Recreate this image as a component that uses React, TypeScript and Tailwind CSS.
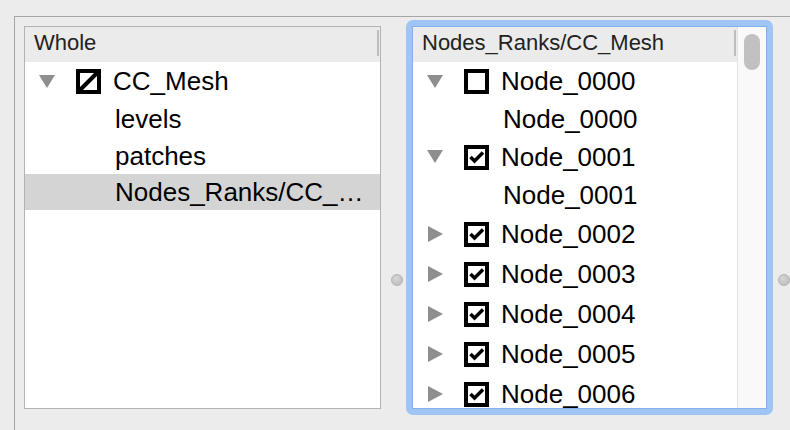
import React from 'react';

const font = "font-['Liberation_Sans',Arial,sans-serif]";

const Triangle = ({ open }: { open: boolean }) => (
  <svg width="16" height="16" viewBox="0 0 16 16" className="shrink-0">
    {open ? (
      <polygon points="0,1 16,1 8,14" fill="#8e8e8e" />
    ) : (
      <polygon points="1,0 16,8 1,16" fill="#8e8e8e" />
    )}
  </svg>
);

const Check = ({ state }: { state: 'on' | 'off' | 'partial' }) => (
  <svg width="25" height="25" viewBox="0 0 25 25" className="ml-[21px] shrink-0">
    <rect x="2" y="2" width="21" height="21" fill="#fff" stroke="#000" strokeWidth="4" />
    {state === 'on' && (
      <polyline points="6.5,12 10.5,16 19,7.5" fill="none" stroke="#000" strokeWidth="3.5" />
    )}
    {state === 'partial' && <line x1="4" y1="21" x2="21" y2="4" stroke="#000" strokeWidth="4" />}
  </svg>
);

type Row = { label: string; h: string; parent?: boolean; open?: boolean; state?: 'on' | 'off' | 'partial'; selected?: boolean };

const TreeRow = ({ row }: { row: Row }) => (
  <div className={`flex items-center ${row.h} ${row.selected ? 'bg-[#d4d4d4]' : ''} ${row.parent ? 'pl-[14px]' : 'pl-[90px]'}`}>
    {row.parent && <Triangle open={!!row.open} />}
    {row.parent && <Check state={row.state || 'off'} />}
    <span className={`text-[26px] text-black whitespace-nowrap ${row.parent ? 'ml-[12px]' : ''}`}>{row.label}</span>
  </div>
);

const Header = ({ title }: { title: string }) => (
  <div className="flex h-[35px] bg-[#ebebeb]">
    <div className="flex-1 pl-[9px] text-[22px] leading-[31px] text-[#222]">{title}</div>
    <div className="w-[2px] h-[26px] mt-[3px] mr-[1px] bg-[#bdbdbd]" />
  </div>
);

const leftRows: Row[] = [
  { label: 'CC_Mesh', h: 'h-[39px]', parent: true, open: true, state: 'partial' },
  { label: 'levels', h: 'h-[37px]' },
  { label: 'patches', h: 'h-[36px]' },
  { label: 'Nodes_Ranks/CC_…', h: 'h-[36px]', selected: true },
];

const rightRows: Row[] = [
  { label: 'Node_0000', h: 'h-[39px]', parent: true, open: true, state: 'off' },
  { label: 'Node_0000', h: 'h-[37px]' },
  { label: 'Node_0001', h: 'h-[38px]', parent: true, open: true, state: 'on' },
  { label: 'Node_0001', h: 'h-[38px]' },
  { label: 'Node_0002', h: 'h-[40px]', parent: true, state: 'on' },
  { label: 'Node_0003', h: 'h-[40px]', parent: true, state: 'on' },
  { label: 'Node_0004', h: 'h-[40px]', parent: true, state: 'on' },
  { label: 'Node_0005', h: 'h-[40px]', parent: true, state: 'on' },
  { label: 'Node_0006', h: 'h-[40px]', parent: true, state: 'on' },
];

const Handle = () => (
  <div className="w-[12px] h-[12px] rounded-full bg-[radial-gradient(circle_at_40%_35%,#d6d6d6,#b9b9b9)] border border-[#b3b3b3]" />
);

export default function App() {
  return (
    <div className={`w-[790px] h-[430px] overflow-hidden bg-[#ececec] pt-[16px] pl-[14px] ${font}`}>
      <div className="h-full border-l border-t border-[#a6a6a6] pl-[9px] pt-[3px]">
        <div className="flex items-start">
          <div className="mt-[6px] w-[357px] h-[383px] border border-[#b3b3b3] bg-white overflow-hidden">
            <Header title="Whole" />
            {leftRows.map((r, i) => (
              <TreeRow key={i} row={r} />
            ))}
          </div>

          <div className="w-[25px] pl-[10px] pt-[254px]">
            <Handle />
          </div>

          <div className="w-[367px] h-[395px] border-[6px] border-[#9ec5f3] rounded-[7px] shrink-0">
            <div className="h-full border border-[#82b0ea] bg-white flex overflow-hidden">
              <div className="flex-1 overflow-hidden">
                <Header title="Nodes_Ranks/CC_Mesh" />
                {rightRows.map((r, i) => (
                  <TreeRow key={i} row={r} />
                ))}
              </div>
              <div className="w-[29px] h-full border-l border-[#e3e3e3] bg-[#f9f9f9] pl-[6px] pt-[7px]">
                <div className="w-[16px] h-[36px] rounded-full bg-[#c1c1c1]" />
              </div>
            </div>
          </div>

          <div className="pl-[5px] pt-[254px] shrink-0">
            <Handle />
          </div>
        </div>
      </div>
    </div>
  );
}
